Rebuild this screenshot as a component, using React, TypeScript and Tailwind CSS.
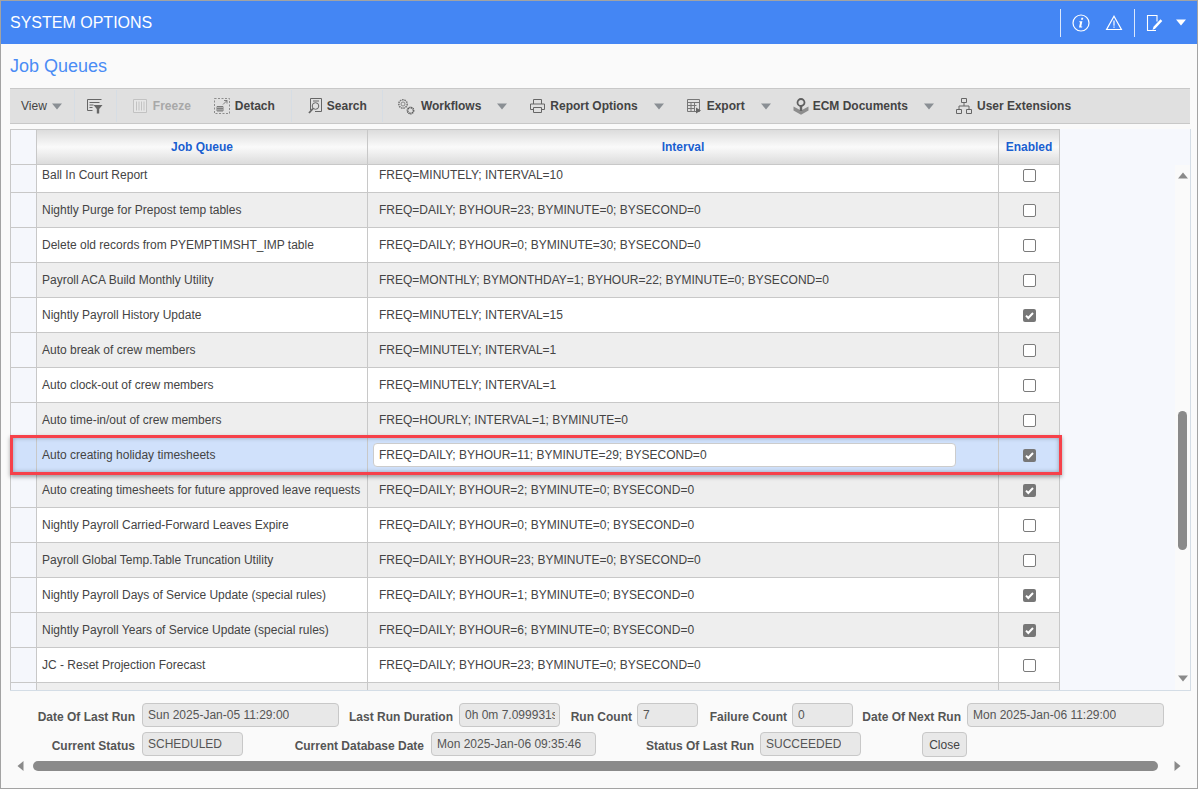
import React from "react";

const rows = [
  { name: "Ball In Court Report", interval: "FREQ=MINUTELY; INTERVAL=10", on: false },
  { name: "Nightly Purge for Prepost temp tables", interval: "FREQ=DAILY; BYHOUR=23; BYMINUTE=0; BYSECOND=0", on: false },
  { name: "Delete old records from PYEMPTIMSHT_IMP table", interval: "FREQ=DAILY; BYHOUR=0; BYMINUTE=30; BYSECOND=0", on: false },
  { name: "Payroll ACA Build Monthly Utility", interval: "FREQ=MONTHLY; BYMONTHDAY=1; BYHOUR=22; BYMINUTE=0; BYSECOND=0", on: false },
  { name: "Nightly Payroll History Update", interval: "FREQ=MINUTELY; INTERVAL=15", on: true },
  { name: "Auto break of crew members", interval: "FREQ=MINUTELY; INTERVAL=1", on: false },
  { name: "Auto clock-out of crew members", interval: "FREQ=MINUTELY; INTERVAL=1", on: false },
  { name: "Auto time-in/out of crew members", interval: "FREQ=HOURLY; INTERVAL=1; BYMINUTE=0", on: false },
  { name: "Auto creating holiday timesheets", interval: "FREQ=DAILY; BYHOUR=11; BYMINUTE=29; BYSECOND=0", on: true, active: true },
  { name: "Auto creating timesheets for future approved leave requests", interval: "FREQ=DAILY; BYHOUR=2; BYMINUTE=0; BYSECOND=0", on: true },
  { name: "Nightly Payroll Carried-Forward Leaves Expire", interval: "FREQ=DAILY; BYHOUR=0; BYMINUTE=0; BYSECOND=0", on: false },
  { name: "Payroll Global Temp.Table Truncation Utility", interval: "FREQ=DAILY; BYHOUR=23; BYMINUTE=0; BYSECOND=0", on: false },
  { name: "Nightly Payroll Days of Service Update (special rules)", interval: "FREQ=DAILY; BYHOUR=1; BYMINUTE=0; BYSECOND=0", on: true },
  { name: "Nightly Payroll Years of Service Update (special rules)", interval: "FREQ=DAILY; BYHOUR=6; BYMINUTE=0; BYSECOND=0", on: true },
  { name: "JC - Reset Projection Forecast", interval: "FREQ=DAILY; BYHOUR=23; BYMINUTE=0; BYSECOND=0", on: false },
];

function Caret({ className }: { className: string }) {
  return (
    <svg width="10" height="7" viewBox="0 0 10 7" className={className}>
      <path d="M0 0.5h10L5 6.5z" fill="#8a8f94" />
    </svg>
  );
}

function Sep({ className }: { className: string }) {
  return <div className={"w-px h-[32px] bg-[#d6dde4] " + className} />;
}

function Check({ on }: { on: boolean }) {
  if (on) {
    return (
      <div className="w-[13px] h-[13px] rounded-[2px] bg-[#777777] flex items-center justify-center">
        <svg width="11" height="11" viewBox="0 0 11 11">
          <path d="M2 5.6l2.3 2.4L9 3" fill="none" stroke="#ffffff" strokeWidth="2" />
        </svg>
      </div>
    );
  }
  return <div className="w-[13px] h-[13px] rounded-[2px] bg-white border border-[#7b7b7b]" />;
}

function Row({ row, index }: { row: (typeof rows)[number]; index: number }) {
  const bg = row.active ? "bg-[#d0e1fb]" : index % 2 === 0 ? "bg-white" : "bg-[#eeeeee]";
  return (
    <div className={"flex h-[35px] border-b border-[#c8c8c8] " + bg}>
      <div className={"w-[26px] shrink-0 border-r border-[#c8c8c8] " + (row.active ? "bg-[#d0e1fb]" : "bg-[#f5f7fc]")} />
      <div className="w-[331px] shrink-0 border-r border-[#c8c8c8] pl-[5px] flex items-center whitespace-nowrap overflow-hidden text-[#444444]">
        {row.name}
      </div>
      <div className="w-[631px] shrink-0 border-r border-[#c8c8c8] flex items-center text-[#444444] whitespace-nowrap">
        {row.active ? (
          <input
            readOnly
            value={row.interval}
            className="ml-[5px] w-[583px] h-[24px] mb-[1px] pl-[5px] pt-[1px] bg-white border border-[#cccccc] rounded-[4px] text-[#444444] outline-none"
          />
        ) : (
          <span className="pl-[11px]">{row.interval}</span>
        )}
      </div>
      <div className="w-[61px] shrink-0 border-r border-[#c8c8c8] flex items-center justify-center">
        <Check on={row.on} />
      </div>
    </div>
  );
}

function Field({ label, value, labelW, gap, inputW }: { label: string; value: string; labelW: string; gap: string; inputW: string }) {
  return (
    <>
      <span className={"text-right whitespace-nowrap font-bold text-[#555555] pt-[5px] shrink-0 " + labelW}>{label}</span>
      <div className={"h-[24px] shrink-0 bg-[#e8e8e8] border border-[#c8c8c8] rounded-[4px] pl-[5px] pr-[4px] pb-[1px] flex items-center whitespace-nowrap text-[#555555] " + gap + " " + inputW}>
        <span className="block overflow-hidden">{value}</span>
      </div>
    </>
  );
}

function App() {
  return (
    <div className="relative w-[1198px] h-[789px] overflow-hidden bg-[#fafafa] border border-[#a3a3a3] text-[12px] font-['Liberation_Sans',Arial,sans-serif]">
      <header className="h-[43px] bg-[#4486f4] flex items-center text-white">
        <h1 className="ml-[9px] text-[16px] leading-none font-normal">SYSTEM OPTIONS</h1>
        <div className="w-px h-[28px] bg-[#dbe7fc] ml-[908px]" />
        <svg width="18" height="18" viewBox="0 0 18 18" className="ml-[11px]">
          <circle cx="9" cy="9" r="8" fill="none" stroke="#ffffff" strokeWidth="1.2" />
          <path d="M9.400 3.800h1.900l-.4 1.900H9zM7.400 7.300h3l-1.200 5.300h1.100l-.2.900H7l1.100-5.300h-.9z" fill="#ffffff" />
        </svg>
        <svg width="18" height="18" viewBox="0 0 18 18" className="ml-[15px]">
          <path d="M9 2.200L16.400 15.500H1.600z" fill="none" stroke="#ffffff" strokeWidth="1.2" />
          <path d="M8.400 6.500h1.200v5.200H8.400zM8.400 12.500h1.200v1.300H8.400z" fill="#ffffff" />
        </svg>
        <div className="w-px h-[28px] bg-[#dbe7fc] ml-[11px]" />
        <svg width="18" height="18" viewBox="0 0 18 18" className="ml-[11px]">
          <path d="M10 16.500H1.500v-15h9.500v6" fill="none" stroke="#ffffff" strokeWidth="1.100" />
          <path d="M6.500 16l1-3.200 7-7.500 1.800 1.800-7 7.500z" fill="#ffffff" />
        </svg>
        <svg width="10" height="7" viewBox="0 0 10 7" className="ml-[12px]">
          <path d="M0 0.500h10L5 6.500z" fill="#ffffff" />
        </svg>
      </header>

      <h2 className="ml-[9px] mt-[12px] h-[20px] text-[18px] leading-[20px] font-normal text-[#4a8cf5]">Job Queues</h2>

      <div className="ml-[9px] mt-[12px] w-[1180px] h-[36px] bg-[#e0e0e0] border-y border-[#c8c8c8] flex items-center text-[#444444] whitespace-nowrap">
        <span className="ml-[11px]">View</span>
        <Caret className="ml-[5px]" />
        <Sep className="ml-[12px]" />
        <svg width="16" height="15" viewBox="0 0 16 15" className="ml-[12px]">
          <path d="M0.500 0.500h14M0.500 0.500v11h5M2.500 3.500h10M2.500 6h4M2.500 8.500h3" fill="none" stroke="#666666" />
          <path d="M6.500 6h9L12.200 10v4.500h-2.400V10z" fill="#666666" />
        </svg>
        <Sep className="ml-[13px]" />
        <svg width="14" height="14" viewBox="0 0 14 14" className="ml-[16px]">
          <path d="M0.500 0.500h13v13h-13zM3.500 2.500v9M6 2.500v9M8.500 2.500v9M11 2.500v9" fill="#e6e6e6" stroke="#c2c2c2" />
        </svg>
        <span className="ml-[6px] font-bold text-[#a8a8a8]">Freeze</span>
        <svg width="16" height="16" viewBox="0 0 16 16" className="ml-[23px]">
          <path d="M0.500 0.500h15v15h-15z" fill="none" stroke="#777777" strokeWidth="0.800" strokeDasharray="2 1.500" />
          <path d="M9 6.500l4-4M10 2.500h3v3" fill="none" stroke="#666666" strokeWidth="0.800" />
          <path d="M3 8.500h6v4.500H3zM3 10.700h6M5 8.500v4.500M7 8.500v4.500" fill="none" stroke="#666666" strokeWidth="0.800" />
        </svg>
        <span className="ml-[5px] font-bold">Detach</span>
        <Sep className="ml-[16px]" />
        <svg width="15" height="16" viewBox="0 0 15 16" className="ml-[16px]">
          <path d="M2.500 12V0.500h11v13H7" fill="none" stroke="#666666" />
          <circle cx="7.500" cy="8" r="3.300" fill="none" stroke="#666666" />
          <path d="M5 10.500L1 15" stroke="#666666" strokeWidth="1.800" />
          <path d="M5 3h6" stroke="#666666" />
        </svg>
        <span className="ml-[4px] font-bold">Search</span>
        <Sep className="ml-[15px]" />
        <svg width="18" height="17" viewBox="0 0 18 17" className="ml-[14px]">
          <circle cx="6" cy="6" r="4.200" fill="none" stroke="#777777" strokeWidth="1.600" strokeDasharray="1.500 0.800" />
          <circle cx="6" cy="6" r="2" fill="none" stroke="#888888" />
          <circle cx="13.500" cy="12.500" r="3" fill="none" stroke="#555555" strokeWidth="1.800" strokeDasharray="1.200 0.600" />
        </svg>
        <span className="ml-[6px] font-bold">Workflows</span>
        <Caret className="ml-[16px]" />
        <svg width="15" height="14" viewBox="0 0 15 14" className="ml-[23px]">
          <path d="M3.500 5V0.500h8V5M3.500 10.500h-3V5h14v5.500h-3M3.500 8.500h8v5h-8z" fill="none" stroke="#666666" />
        </svg>
        <span className="ml-[5px] font-bold">Report Options</span>
        <Caret className="ml-[16px]" />
        <svg width="15" height="15" viewBox="0 0 15 15" className="ml-[23px]">
          <path d="M0.500 0.500h12v12h-12zM0.500 3.500h12M0.500 6.500h9M0.500 9.500h7M4 3.500v9M7.500 3.500v9" fill="none" stroke="#777777" />
          <path d="M9 8.500l5 3-5 3z" fill="#666666" />
        </svg>
        <span className="ml-[5px] font-bold">Export</span>
        <Caret className="ml-[16px]" />
        <svg width="16" height="17" viewBox="0 0 16 17" className="ml-[22px]">
          <path d="M0.500 8.500l7.500 4 7.500-4v4L8 16.800 0.500 12.500z" fill="#8d8d8d" />
          <path d="M6.800 7h2.400v6H6.800z" fill="#666666" />
          <circle cx="8" cy="4.500" r="3.500" fill="#e0e0e0" stroke="#5f5f5f" strokeWidth="1.800" />
        </svg>
        <span className="ml-[4px] font-bold">ECM Documents</span>
        <Caret className="ml-[16px]" />
        <svg width="16" height="16" viewBox="0 0 16 16" className="ml-[22px]">
          <path d="M5.500 0.500h5v4h-5zM0.500 11.500h5v4h-5zM10.500 11.500h5v4h-5zM8 4.500v3.500M3 11.500V8h10v3.500" fill="none" stroke="#666666" />
        </svg>
        <span className="ml-[5px] font-bold">User Extensions</span>
      </div>

      <div className="ml-[9px] mt-[5px] w-[1181px] h-[562px] flex border-b border-r border-[#d4dde6] bg-[#f6f8fd]">
        <div className="w-[1050px] shrink-0 flex flex-col">
          <div className="h-[36px] shrink-0 flex border-y border-[#c8c8c8] font-bold text-[#1a5fd0] bg-[linear-gradient(#dcdcdc,#fafafa_50%,#dcdcdc)]">
            <div className="w-[27px] shrink-0 border-x border-[#c8c8c8] bg-[#f5f7fc]" />
            <div className="w-[331px] shrink-0 border-r border-[#c8c8c8] flex items-center justify-center">Job Queue</div>
            <div className="w-[631px] shrink-0 border-r border-[#c8c8c8] flex items-center justify-center">Interval</div>
            <div className="w-[61px] shrink-0 border-r border-[#c8c8c8] flex items-center justify-center">Enabled</div>
          </div>
          <div className="h-[526px] overflow-hidden border-l border-[#c8c8c8]">
            <div className="-mt-[7px]">
              {rows.map((row, i) => (
                <Row key={row.name} row={row} index={i} />
              ))}
              <div className="flex h-[35px] bg-[#eeeeee]">
                <div className="w-[26px] border-r border-[#c8c8c8] bg-[#f5f7fc]" />
                <div className="w-[331px] border-r border-[#c8c8c8]" />
                <div className="w-[631px] border-r border-[#c8c8c8]" />
                <div className="w-[61px] border-r border-[#c8c8c8]" />
              </div>
            </div>
          </div>
        </div>
        <div className="flex-1" />
        <div className="w-[15px] shrink-0 mt-[36px] bg-[#fafafa] flex flex-col items-center pt-[7px] pb-[8px]">
          <svg width="10" height="7" viewBox="0 0 10 7"><path d="M0 6.500h10L5 0.500z" fill="#8a8a8a" /></svg>
          <div className="w-[9px] h-[139px] mt-[232px] rounded-full bg-[#8a8a8a]" />
          <div className="flex-1" />
          <svg width="10" height="7" viewBox="0 0 10 7"><path d="M0 0.500h10L5 6.500z" fill="#8a8a8a" /></svg>
        </div>
      </div>

      <div className="mt-[12px] flex items-start h-[24px]">
        <Field label="Date Of Last Run" value="Sun 2025-Jan-05 11:29:00" labelW="w-[134px]" gap="ml-[7px]" inputW="w-[197px]" />
        <Field label="Last Run Duration" value="0h 0m 7.099931s" labelW="w-[114px]" gap="ml-[6px]" inputW="w-[101px]" />
        <Field label="Run Count" value="7" labelW="w-[72px]" gap="ml-[5px]" inputW="w-[61px]" />
        <Field label="Failure Count" value="0" labelW="w-[89px]" gap="ml-[5px]" inputW="w-[61px]" />
        <Field label="Date Of Next Run" value="Mon 2025-Jan-06 11:29:00" labelW="w-[108px]" gap="ml-[6px]" inputW="w-[197px]" />
      </div>
      <div className="mt-[5px] flex items-start h-[24px]">
        <Field label="Current Status" value="SCHEDULED" labelW="w-[134px]" gap="ml-[7px]" inputW="w-[101px]" />
        <Field label="Current Database Date" value="Mon 2025-Jan-06 09:35:46" labelW="w-[181px]" gap="ml-[7px]" inputW="w-[165px]" />
        <Field label="Status Of Last Run" value="SUCCEEDED" labelW="w-[158px]" gap="ml-[6px]" inputW="w-[101px]" />
        <button className="ml-[61px] w-[45px] h-[25px] pt-[1px] bg-[#e8e8e8] border border-[#c8c8c8] rounded-[4px] text-[#444444]">Close</button>
      </div>

      <div className="mt-[3px] h-[13px] mx-[9px] flex items-center bg-[#fafafa]">
        <svg width="7" height="10" viewBox="0 0 7 10" className="ml-[7px]"><path d="M6.500 0v10L0.500 5z" fill="#8a8a8a" /></svg>
        <div className="ml-[9px] w-[1125px] h-[10px] rounded-full bg-[#8a8a8a]" />
        <svg width="7" height="10" viewBox="0 0 7 10" className="ml-[16px]"><path d="M0.500 0v10l6-5z" fill="#8a8a8a" /></svg>
      </div>

      <div className="absolute left-[9px] top-[434px] w-[1052px] h-[40px] border-[3px] border-[#f6414a] shadow-[0_2px_4px_rgba(0,0,0,0.35),inset_0_0_4px_rgba(0,0,0,0.3)] pointer-events-none" />
    </div>
  );
}

export default App;
